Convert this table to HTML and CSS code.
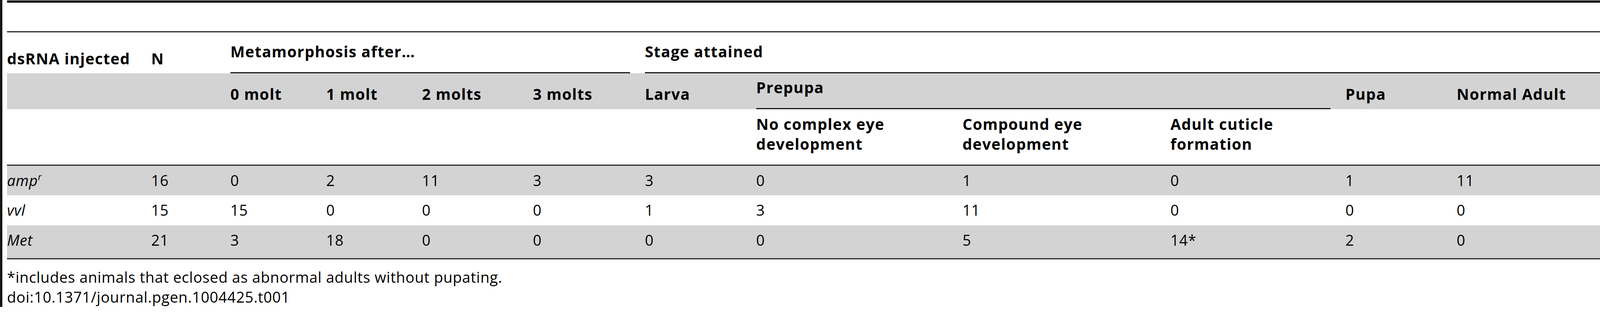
FILE: index.html
```html
<!DOCTYPE html>
<html lang="en">
<head>
<meta charset="utf-8">
<title>Table 1</title>
<link rel="stylesheet" href="styles.css">
</head>
<body>
<div class="frame">
  <div class="table-top"></div>
  <div class="table" role="table">
    <div class="row head h1" role="row">
      <div class="cell" role="columnheader">dsRNA injected</div>
      <div class="cell" role="columnheader">N</div>
      <div class="cell span4" role="columnheader"><div class="rule">Metamorphosis after…</div></div>
      <div class="cell span6 last" role="columnheader"><div class="rule">Stage attained</div></div>
    </div>
    <div class="row head h2 shade" role="row">
      <div class="cell"></div>
      <div class="cell"></div>
      <div class="cell">0 molt</div>
      <div class="cell">1 molt</div>
      <div class="cell">2 molts</div>
      <div class="cell">3 molts</div>
      <div class="cell">Larva</div>
      <div class="cell span3"><div class="rule">Prepupa</div></div>
      <div class="cell">Pupa</div>
      <div class="cell last">Normal Adult</div>
    </div>
    <div class="row head h3" role="row">
      <div class="cell"></div><div class="cell"></div><div class="cell"></div><div class="cell"></div>
      <div class="cell"></div><div class="cell"></div><div class="cell"></div>
      <div class="cell">No complex eye<br>development</div>
      <div class="cell">Compound eye<br>development</div>
      <div class="cell">Adult cuticle<br>formation</div>
      <div class="cell"></div><div class="cell last"></div>
    </div>
    <div class="row body r1 shade" role="row">
      <div class="cell"><i>amp<sup>r</sup></i></div><div class="cell">16</div><div class="cell">0</div><div class="cell">2</div><div class="cell">11</div><div class="cell">3</div><div class="cell">3</div><div class="cell">0</div><div class="cell">1</div><div class="cell">0</div><div class="cell">1</div><div class="cell last">11</div>
    </div>
    <div class="row body r2" role="row">
      <div class="cell"><i>vvl</i></div><div class="cell">15</div><div class="cell">15</div><div class="cell">0</div><div class="cell">0</div><div class="cell">0</div><div class="cell">1</div><div class="cell">3</div><div class="cell">11</div><div class="cell">0</div><div class="cell">0</div><div class="cell last">0</div>
    </div>
    <div class="row body r3 shade" role="row">
      <div class="cell"><i>Met</i></div><div class="cell">21</div><div class="cell">3</div><div class="cell">18</div><div class="cell">0</div><div class="cell">0</div><div class="cell">0</div><div class="cell">0</div><div class="cell">5</div><div class="cell">14*</div><div class="cell">2</div><div class="cell last">0</div>
    </div>
  </div>
  <p class="note">*includes animals that eclosed as abnormal adults without pupating.</p>
  <p class="note">doi:10.1371/journal.pgen.1004425.t001</p>
</div>
</body>
</html>
```

FILE: styles.css
```css
html {
  overflow: hidden;
}

html, body {
  margin: 0;
  padding: 0;
  background: #ffffff;
}

body {
  font-family: "Open Sans", "Noto Sans", sans-serif;
  font-size: 38px;
  letter-spacing: 0.8px;
  line-height: 51px;
  color: #000000;
}

.frame {
  border-left: 6px solid #151515;
  padding: 1px 0 0 12px;
}

.table-top {
  border-top: 6px solid #1a1a1a;
  border-bottom: 3px solid #2a2a2a;
  height: 73px;
}

.row {
  display: grid;
  grid-template-columns:
    minmax(0, 373fr) minmax(0, 205fr) minmax(0, 248fr) minmax(0, 248fr)
    minmax(0, 287fr) minmax(0, 290fr) minmax(0, 288fr) minmax(0, 534fr)
    minmax(0, 538fr) minmax(0, 453fr) minmax(0, 288fr) minmax(0, 371fr);
  box-sizing: border-box;
}

.cell {
  min-width: 0;
  padding-right: 38px;
}

.cell.last {
  padding-right: 0;
}

.span3 { grid-column: span 3; }
.span4 { grid-column: span 4; }
.span6 { grid-column: span 6; }

.shade {
  background: #d3d3d3;
}

/* header rows */
.head {
  align-items: end;
  font-weight: 700;
  font-size: 39px;
  letter-spacing: 1.4px;
}

.head .cell {
  padding-bottom: 13px;
}

.h2 .cell {
  padding-bottom: 14px;
}

.head .cell.span3,
.head .cell.span4,
.head .cell.span6 {
  padding-bottom: 0;
}

.rule {
  padding-bottom: 28px;
  border-bottom: 3px solid #1a1a1a;
}

.h1 { height: 105px; }
.h2 { height: 92px; }

.h3 {
  height: 145px;
  border-bottom: 3px solid #2a2a2a;
}

.h3 .cell {
  padding-bottom: 28px;
}

/* body rows */
.body {
  align-items: start;
  font-weight: 400;
}

.body .cell {
  padding-top: 12px;
}

.r1 { height: 76px; }
.r2 { height: 77px; }

.r3 {
  height: 87px;
  border-bottom: 3px solid #2a2a2a;
}

.body sup {
  font-size: 24px;
  line-height: 0;
  vertical-align: 15px;
}

.note {
  margin: 0;
}

.table + .note {
  margin-top: 20px;
}
```
